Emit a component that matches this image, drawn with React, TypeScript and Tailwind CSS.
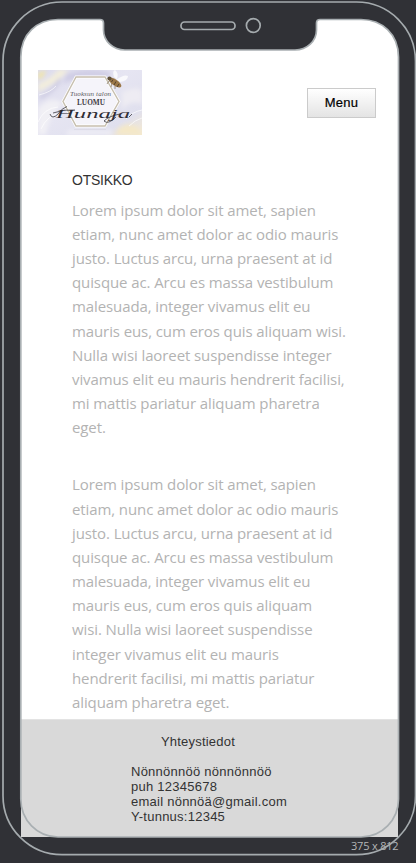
const firstParagraph = [
  'Lorem ipsum dolor sit amet, sapien',
  'etiam, nunc amet dolor ac odio mauris',
  'justo. Luctus arcu, urna praesent at id',
  'quisque ac. Arcu es massa vestibulum',
  'malesuada, integer vivamus elit eu',
  'mauris eus, cum eros quis aliquam wisi.',
  'Nulla wisi laoreet suspendisse integer',
  'vivamus elit eu mauris hendrerit facilisi,',
  'mi mattis pariatur aliquam pharetra',
  'eget.',
];

const secondParagraph = [
  'Lorem ipsum dolor sit amet, sapien',
  'etiam, nunc amet dolor ac odio mauris',
  'justo. Luctus arcu, urna praesent at id',
  'quisque ac. Arcu es massa vestibulum',
  'malesuada, integer vivamus elit eu',
  'mauris eus, cum eros quis aliquam',
  'wisi. Nulla wisi laoreet suspendisse',
  'integer vivamus elit eu mauris',
  'hendrerit facilisi, mi mattis pariatur',
  'aliquam pharetra eget.',
];

function Paragraph({ lines }: { lines: string[] }) {
  return (
    <p className="whitespace-nowrap font-['Open_Sans',sans-serif] text-[15px] leading-[24.15px] tracking-[-0.1px] text-[#b3b3b3]">
      {lines.map((line) => (
        <span key={line} className="block">{line}</span>
      ))}
    </p>
  );
}

function Logo() {
  return (
    <svg className="h-[65px] w-[104px]" viewBox="0 0 104 65" aria-label="Luomu Hunaja">
      <defs>
        <linearGradient id="paint" x1="0" y1="0" x2="1" y2="1">
          <stop offset="0" stopColor="#dddced" />
          <stop offset="0.45" stopColor="#e6e5f2" />
          <stop offset="0.8" stopColor="#e0e0ee" />
          <stop offset="1" stopColor="#f5ead0" />
        </linearGradient>
        <filter id="soft" x="-30%" y="-30%" width="160%" height="160%">
          <feGaussianBlur stdDeviation="2" />
        </filter>
        <clipPath id="logoClip"><rect width="104" height="65" /></clipPath>
      </defs>
      <g clipPath="url(#logoClip)">
        <rect width="104" height="65" fill="url(#paint)" />
        <g filter="url(#soft)">
          <path d="M0 14 Q14 8 20 0 L31 0 Q18 13 0 22Z" fill="#f3eedb" />
          <path d="M0 3 L9 0 L4 8 L0 10Z" fill="#f2e6a8" />
          <path d="M0 38 Q14 24 25 34 Q12 42 8 65 L0 65Z" fill="#f1f0f5" />
          <path d="M28 4 Q52 -4 75 3 L68 8 Q42 5 25 14Z" fill="#d0cee5" />
          <path d="M84 22 Q98 16 104 20 V34 Q92 29 84 40Z" fill="#eeecf3" />
          <path d="M30 60 H74 V65 H28Z" fill="#eeedf5" />
          <path d="M77 65 Q83 50 99 57 L104 65Z" fill="#f4e8c8" />
          <path d="M2 28 Q18 19 22 9" stroke="#c9c7df" strokeWidth="3" fill="none" />
        </g>
        <path d="M0 52 Q6 38 20 37 M3 59 Q9 45 23 43 M88 49 Q94 42 104 40 M91 56 Q97 50 104 48 M1 25 Q13 22 18 16" fill="none" stroke="#fff" strokeOpacity=".65" strokeWidth="1" />
        <path d="M38 7 H67 L81 31.5 L67 56 H38 L25 31.5Z" fill="#f5f4fa" stroke="#fff" strokeWidth="3" />
        <path d="M38 7 H67 L81 31.5 L67 56 H38 L25 31.5Z" fill="none" stroke="#c7bfaf" strokeWidth="1.4" />
        <path d="M36 59.5 H68" stroke="#d9d6e2" strokeWidth=".7" />
        <path d="M76 7 Q74 1 77 0 Q81 3 79 9Z M78 10 Q86 4 90 6 Q90 11 82 12Z" fill="#fff" fillOpacity=".75" />
        <path d="M71 11 L69 14 M74 13 L73 17 M77 16 L77 19" stroke="#6c5a43" strokeWidth=".6" />
        <ellipse cx="77" cy="12.5" rx="7.5" ry="3" transform="rotate(35 77 12.5)" fill="#9b7747" />
        <path d="M75 9.5 L73.5 12 M78 11.5 L76 15 M81 14 L79 17" stroke="#4c3b29" strokeWidth=".9" />
        <circle cx="71.5" cy="8.5" r="2.1" fill="#5f5039" />
        <text x="32" y="25.5" textLength="41" lengthAdjust="spacing" fill="#5a5860" className="font-['Liberation_Serif',serif] text-[7px] italic">Tuoksun talon</text>
        <text x="39" y="35.2" textLength="28" lengthAdjust="spacingAndGlyphs" fill="#3f3d45" className="font-['Liberation_Serif',serif] text-[7.5px] font-bold">LUOMU</text>
        <text x="18" y="47.5" textLength="74" lengthAdjust="spacingAndGlyphs" fill="#302e36" className="font-['Liberation_Serif',serif] text-[13.5px] italic">Hunaja</text>
        <path d="M12 44 Q14 50 20 44 Q24 38 29 36.5 M15 43 Q26 39 37 40 M78 47 Q70 55 66 51 Q71 46 82 44 M91 47 L94 44" fill="none" stroke="#24222a" strokeWidth=".7" />
      </g>
    </svg>
  );
}

function DeviceFrame() {
  return (
    <svg className="pointer-events-none absolute inset-0" width="416" height="863" viewBox="0 0 416 863" fill="none" aria-hidden="true">
      <path d="M20 19 H399 V57 H398.5 C398.5 34 382 19.5 361 19.5 H320 Q316.5 19.5 316.5 23 V30 C316.5 41 307 50 295 50 H125 C113 50 103.5 41 103.5 30 V23 Q103.5 19.5 100 19.5 H58 C37 19.5 21 34 21 57 H20Z" fill="#303136" />
      <rect x="3" y="2" width="412.5" height="852.7" rx="59" stroke="#a5abae" strokeWidth="1.7" />
      <path d="M58 19.5 H100 Q103.5 19.5 103.5 23 V30 C103.5 41 113 50 125 50 H295 C307 50 316.5 41 316.5 30 V23 Q316.5 19.5 320 19.5 H361 C382 19.5 398.5 34 398.5 57 V799 C398.5 820 382 837 361 837 H58 C37 837 20.8 820 20.8 799 V57 C20.8 34 37 19.5 58 19.5Z" stroke="#a9afb2" strokeWidth="1.7" />
      <rect x="181" y="22" width="54" height="7.5" rx="3.5" stroke="#a5abae" strokeWidth="1.7" />
      <circle cx="253.3" cy="25.5" r="6.9" stroke="#a5abae" strokeWidth="1.7" />
    </svg>
  );
}

export default function App() {
  return (
    <div className="relative h-[863px] w-[416px] overflow-hidden bg-[#303136] px-[21px] pt-5">
      <div className="flex h-[817px] w-[377px] flex-col bg-white">
        <header className="flex items-start justify-between pl-[17px] pr-[22px] pt-[50px]">
          <Logo />
          <button className="mt-[18px] h-[30px] w-[69px] border border-[#cbcbcb] bg-linear-to-b from-white to-[#e4e4e4] font-['Liberation_Sans',sans-serif] text-[13px] leading-[28px] tracking-[0.3px] text-black [-webkit-text-stroke:0.2px_black]">Menu</button>
        </header>
        <main className="h-[584px] shrink-0 pl-[51px] pt-9">
          <h1 className="mb-[8.75px] font-['Liberation_Sans',sans-serif] text-[14px] leading-[18px] tracking-[-0.25px] text-[#333]">OTSIKKO</h1>
          <div className="flex flex-col gap-[33.1px]">
            <Paragraph lines={firstParagraph} />
            <Paragraph lines={secondParagraph} />
          </div>
        </main>
        <footer className="flex h-[118px] shrink-0 flex-col border-t border-[#e3e3e3] bg-[#d9d9d9] pt-[14px] font-['Liberation_Sans',sans-serif] text-[13px] leading-[15px] text-[#333]">
          <h2 className="pl-[140px] tracking-[0.2px]">Yhteystiedot</h2>
          <address className="mt-[15px] whitespace-nowrap pl-[110px] not-italic tracking-[0.25px]">
            Nönnönnöö nönnönnöö<br />
            puh 12345678<br />
            email nönnöä@gmail.com<br />
            Y-tunnus:12345
          </address>
        </footer>
      </div>
      <div className="whitespace-nowrap pl-[330px] pt-px font-['Open_Sans',sans-serif] text-[11px] leading-[15px] tracking-[-0.2px] text-[#b4b6b8]">375 x 812</div>
      <DeviceFrame />
    </div>
  );
}
